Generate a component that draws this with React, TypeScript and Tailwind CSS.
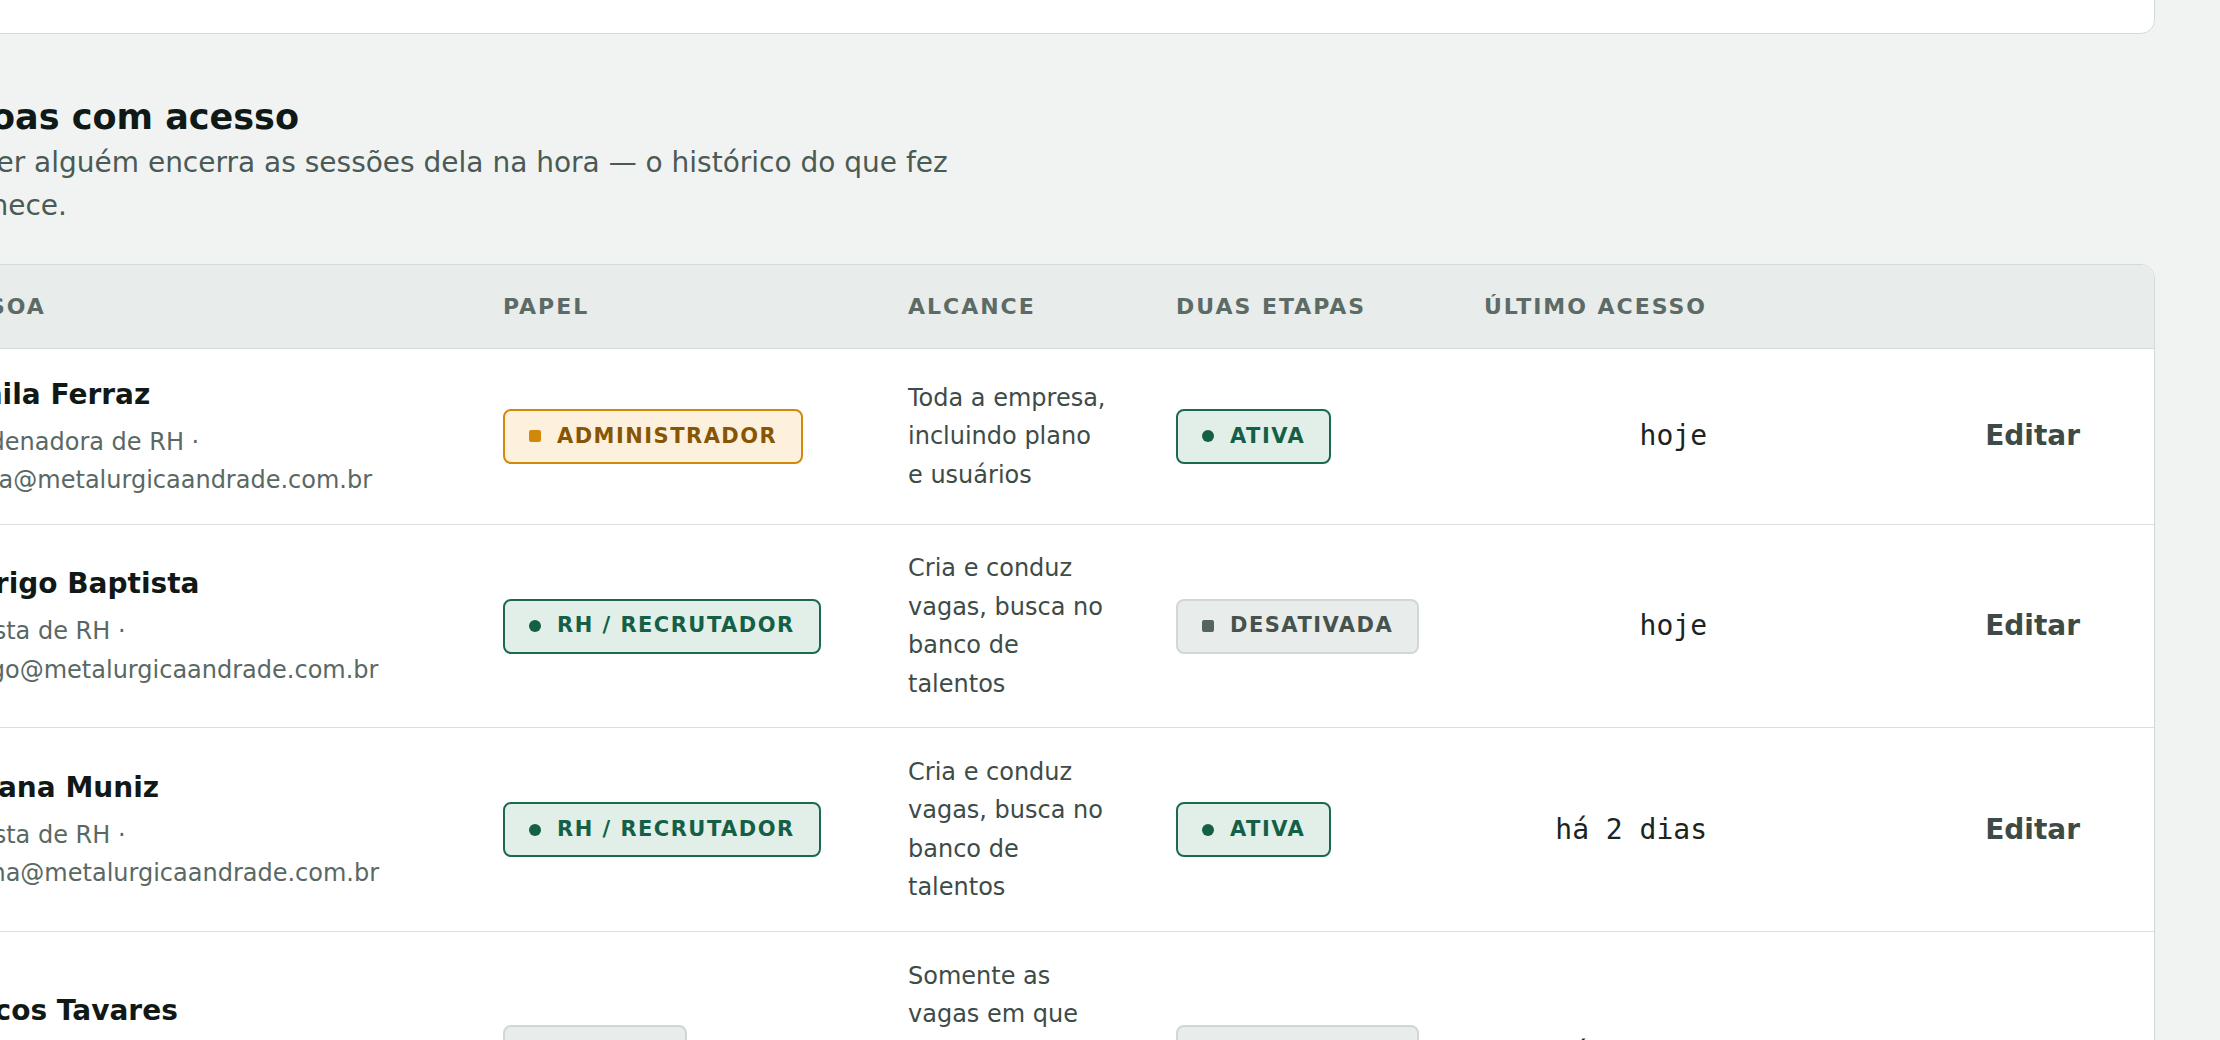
import React from 'react';

type Tone = 'warn' | 'ok' | 'muted';

interface Member {
  name: string;
  role: string;
  email: string;
  papel: string;
  papelTone: Tone;
  alcance: string;
  twoStep: boolean;
  lastSeen: string;
}

const members: Member[] = [
  {
    name: 'Camila Ferraz',
    role: 'Coordenadora de RH',
    email: 'camila@metalurgicaandrade.com.br',
    papel: 'Administrador',
    papelTone: 'warn',
    alcance: 'Toda a empresa, incluindo plano e usuários',
    twoStep: true,
    lastSeen: 'hoje',
  },
  {
    name: 'Rodrigo Baptista',
    role: 'Analista de RH',
    email: 'rodrigo@metalurgicaandrade.com.br',
    papel: 'RH / Recrutador',
    papelTone: 'ok',
    alcance: 'Cria e conduz vagas, busca no banco de talentos',
    twoStep: false,
    lastSeen: 'hoje',
  },
  {
    name: 'Luciana Muniz',
    role: 'Analista de RH',
    email: 'luciana@metalurgicaandrade.com.br',
    papel: 'RH / Recrutador',
    papelTone: 'ok',
    alcance: 'Cria e conduz vagas, busca no banco de talentos',
    twoStep: true,
    lastSeen: 'há 2 dias',
  },
  {
    name: 'Marcos Tavares',
    role: 'Gerente de Produção',
    email: 'marcos@metalurgicaandrade.com.br',
    papel: 'Gestor',
    papelTone: 'muted',
    alcance: 'Somente as vagas em que participa do processo seletivo',
    twoStep: false,
    lastSeen: 'há 6 dias',
  },
];

const toneStyles: Record<Tone, { box: string; dot: string }> = {
  warn: {
    box: 'border-[#d2880a] bg-[#fdf1de] text-[#875604]',
    dot: 'rounded-[2px] bg-[#d2880a]',
  },
  ok: {
    box: 'border-[#1b6a4e] bg-[#e1efe8] text-[#155f47]',
    dot: 'rounded-full bg-[#155f47]',
  },
  muted: {
    box: 'border-[#d0d8d4] bg-[#e8ecea] text-[#45524d]',
    dot: 'rounded-[2px] bg-[#56645f]',
  },
};

function Badge({ tone, children }: { tone: Tone; children: React.ReactNode }) {
  const s = toneStyles[tone];
  return (
    <span
      className={`inline-flex h-[55px] items-center gap-4 rounded-[8px] border-2 px-[24px] text-[21px] font-bold uppercase tracking-[0.07em] whitespace-nowrap ${s.box}`}
    >
      <span className={`h-[12px] w-[12px] shrink-0 ${s.dot}`} />
      {children}
    </span>
  );
}

const cols = 'grid grid-cols-[570px_405px_268px_300px_295px_1fr]';

export default function App() {
  return (
    <div className="h-[1040px] overflow-hidden bg-[#f1f3f2] font-['DejaVu_Sans',sans-serif]">
      <div className="ml-[-100px] mr-[65px]">
        {/* Card above, scrolled out of view */}
        <div className="-mt-[40px] h-[74px] rounded-[14px] border border-[#d3dbd7] bg-white" />

        {/* Section heading */}
        <div className="mt-[61px]">
          <h2 className="text-[35px] font-bold leading-[44px] text-[#0f1a17]">Pessoas com acesso</h2>
          <p className="mt-[2px] max-w-[1100px] text-[28px] leading-[43px] text-[#4a5a55]">
            Remover alguém encerra as sessões dela na hora — o histórico do que fez permanece.
          </p>
        </div>

        {/* Table */}
        <div className="mt-[37px] overflow-hidden rounded-[14px] border border-[#d3dbd7] bg-white">
          <div
            className={`${cols} h-[84px] items-center border-b border-[#d3dbd7] bg-[#e8ecea] text-[22px] font-bold uppercase tracking-[0.09em] text-[#5c6b66]`}
          >
            <div className="pl-[36px] pr-[32px]">Pessoa</div>
            <div className="px-[32px]">Papel</div>
            <div className="px-[32px]">Alcance</div>
            <div className="px-[32px]">Duas etapas</div>
            <div className="px-[32px] text-right">Último acesso</div>
            <div />
          </div>

          {members.map((m) => (
            <div key={m.email} className={`${cols} items-center border-b border-[#d9dfdc] py-[24.5px]`}>
              <div className="pl-[33px] pr-[32px]">
                <div className="mb-[7px] text-[28px] font-bold leading-[42px] text-[#111917]">{m.name}</div>
                <div className="text-[24px] leading-[38.4px] text-[#5a6863]">
                  {m.role} · {m.email}
                </div>
              </div>
              <div className="px-[32px]">
                <Badge tone={m.papelTone}>{m.papel}</Badge>
              </div>
              <div className="px-[32px] text-[24px] leading-[38.4px] text-[#3e4b47]">
                <p className="w-[204px]">{m.alcance}</p>
              </div>
              <div className="px-[32px]">
                {m.twoStep ? <Badge tone="ok">Ativa</Badge> : <Badge tone="muted">Desativada</Badge>}
              </div>
              <div className="px-[32px] text-right font-['DejaVu_Sans_Mono',monospace] text-[28px] text-[#1c2421]">
                {m.lastSeen}
              </div>
              <div className="pr-[74px] text-right">
                <button className="text-[28px] font-bold text-[#3d4a45]">Editar</button>
              </div>
            </div>
          ))}
        </div>
      </div>
    </div>
  );
}
